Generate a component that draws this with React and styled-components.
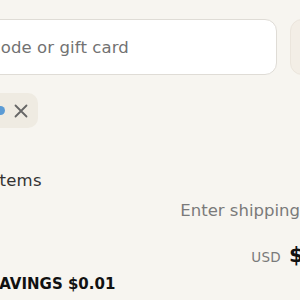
import React from 'react'
import styled, {createGlobalStyle} from 'styled-components'

const GlobalStyle = createGlobalStyle`
    html, body {
        margin: 0;
        background: #f7f5f0;
        overflow: hidden;
    }
    body {
        font-family: "DejaVu Sans", "Liberation Sans", sans-serif;
        color: #1a1a1a;
    }
`

function App() {
    return (
        <>
            <GlobalStyle />
            <Page>
                <DiscountRow>
                    <Field placeholder="Discount code or gift card" />
                    <ApplyButton>Apply</ApplyButton>
                </DiscountRow>
                <Tags>
                    <Tag>
                        <TagLabel>FREESHIP</TagLabel>
                        <InfoDot />
                        <RemoveButton aria-label="Remove">
                            <svg width="14" height="14" viewBox="0 0 14 14" fill="none">
                                <path d="M1.5 1.5l11 11M12.5 1.5l-11 11" stroke="#666" strokeWidth="1.8" strokeLinecap="round" />
                            </svg>
                        </RemoveButton>
                    </Tag>
                </Tags>
                <Lines>
                    <Line>
                        <Label>Subtotal · 2 items</Label>
                        <Value>$12.99</Value>
                    </Line>
                    <Line>
                        <Label>Shipping</Label>
                        <Muted>Enter shipping address</Muted>
                    </Line>
                    <TotalLine>
                        <TotalLabel>Total</TotalLabel>
                        <TotalValue>
                            <Currency>USD</Currency>
                            <Amount>$12.98</Amount>
                        </TotalValue>
                    </TotalLine>
                    <Savings>TOTAL SAVINGS $0.01</Savings>
                </Lines>
            </Page>
        </>
    )
}

export default App

const Page = styled.div`
    width: 480px;
    margin-left: -110px;
    padding-top: 19px;
    display: flex;
    flex-direction: column;
`

const DiscountRow = styled.div`
    display: flex;
    gap: 13px;
    margin-left: 6px;
`

const Field = styled.input`
    flex: 1;
    min-width: 0;
    height: 56px;
    box-sizing: border-box;
    border: 1px solid #dfdcd6;
    border-radius: 12px;
    background: #fff;
    padding: 0 16px;
    font-family: inherit;
    font-size: 16.5px;
    letter-spacing: 0.1px;
    outline: none;
    &::placeholder {
        color: #727272;
    }
`

const ApplyButton = styled.button`
    width: 80px;
    flex-shrink: 0;
    height: 56px;
    border: 1px solid #ebe5dc;
    border-radius: 12px;
    background: #f3eee6;
    color: #a8a29a;
    font-family: inherit;
    font-size: 15px;
`

const Tags = styled.div`
    display: flex;
    margin-top: 18px;
    padding-left: 23px;
`

const Tag = styled.div`
    display: inline-flex;
    align-items: center;
    height: 35px;
    box-sizing: border-box;
    padding: 0 10px 0 12px;
    border-radius: 10px;
    background: #efebe2;
`

const TagLabel = styled.span`
    font-size: 14px;
    color: #333;
    margin-right: 4px;
`

const InfoDot = styled.span`
    width: 9px;
    height: 9px;
    border-radius: 50%;
    background: #5b9bd5;
`

const RemoveButton = styled.button`
    display: flex;
    align-items: center;
    justify-content: center;
    margin-left: 9px;
    padding: 0;
    border: none;
    background: none;
`

const Lines = styled.div`
    display: flex;
    flex-direction: column;
    margin-top: 37px;
`

const Line = styled.div`
    display: flex;
    justify-content: space-between;
    align-items: center;
    height: 30px;
    font-size: 16.5px;
    letter-spacing: 0.3px;
`

const Label = styled.span`
    color: #333;
`

const Value = styled.span`
    color: #333;
`

const Muted = styled.span`
    color: #7a7a7a;
    letter-spacing: 0;
`

const TotalLine = styled.div`
    display: flex;
    justify-content: space-between;
    align-items: baseline;
    margin-top: 18px;
`

const TotalLabel = styled.span`
    font-size: 20px;
    font-weight: 700;
`

const TotalValue = styled.span`
    display: flex;
    align-items: baseline;
    gap: 8px;
`

const Currency = styled.span`
    font-size: 13.5px;
    color: #7a7a7a;
    letter-spacing: 0.3px;
`

const Amount = styled.span`
    font-size: 21px;
    font-weight: 700;
    color: #111;
`

const Savings = styled.div`
    margin-top: 8px;
    padding-left: 40px;
    font-size: 15px;
    font-weight: 700;
    color: #111;
`
